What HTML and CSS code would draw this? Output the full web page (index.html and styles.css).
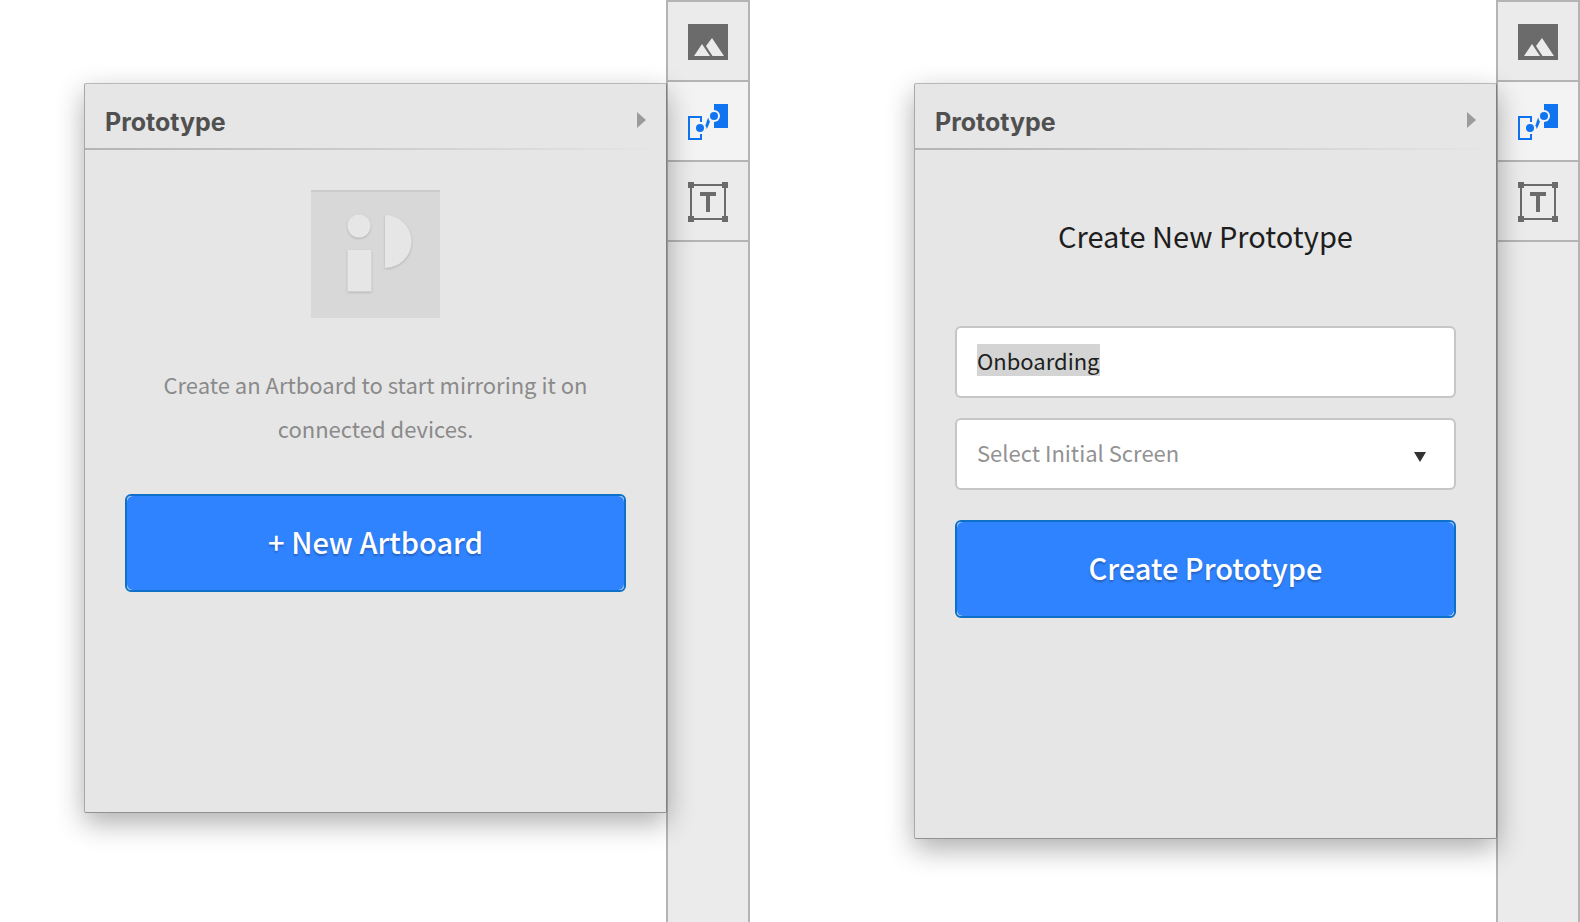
FILE: index.html
```html
<!DOCTYPE html>
<html lang="en">
<head>
  <meta charset="UTF-8" />
  <meta name="viewport" content="width=device-width, initial-scale=1.0" />
  <title>Prototype Panel</title>
  <link rel="stylesheet" href="styles.css">
</head>
<body>
  <!-- Shared toolbar icons -->
  <svg class="sprite" aria-hidden="true">
    <symbol id="icon-image" viewBox="0 0 40 40">
      <path fill="#6b6b6b" d="M0 2h40v36H0z"/>
      <path fill="#ebebeb" d="M6 34l8-12 8 12zM18 24l6-8 12 18H24.500z"/>
    </symbol>
    <symbol id="icon-prototype" viewBox="0 0 40 40">
      <path fill="none" stroke="#1073ef" stroke-width="2" d="M13 20v-5H1v22h12v-5"/>
      <path fill="#1073ef" d="M26 2h14v24H26z"/>
      <circle cx="26" cy="14" r="6" fill="#f3f3f3"/>
      <circle cx="26" cy="14" r="4" fill="#1073ef"/>
      <circle cx="12" cy="26" r="4" fill="#1073ef"/>
      <path fill="#1073ef" d="M20.500 15.500c0 2 .7 3 1.500 4-1.200 2.500-1.500 5-3.500 7.500 0-2-.5-2.800-1.200-3.300 1.400-2.700 1.200-5.700 3.200-8.200z"/>
    </symbol>
    <symbol id="icon-text" viewBox="0 0 40 40">
      <path fill="none" stroke="#6b6b6b" stroke-width="2" d="M3 3h34v34H3z"/>
      <path fill="#6b6b6b" d="M0 0h6v6H0zM34 0h6v6h-6zM0 34h6v6H0zM34 34h6v6h-6zM12 10h16v4h-6v16h-4V14h-6z"/>
    </symbol>
  </svg>

  <div class="container">
    <!-- Empty state -->
    <section class="screen">
      <div class="panel">
        <header class="panel-header">
          <h2>Prototype</h2>
          <button class="collapse" aria-label="Collapse panel">
            <svg width="9" height="16" viewBox="0 0 9 16"><path fill="#9b9b9b" d="M0 0l9 8-9 8z"/></svg>
          </button>
        </header>
        <div class="panel-body empty">
          <svg class="logo" width="129" height="128" viewBox="0 0 129 128" aria-hidden="true">
            <path fill="#d8d8d8" d="M0 0h129v128H0z"/>
            <path fill="#cbcbcb" d="M0 0h129v2H0z"/>
            <g class="logo-shapes">
              <circle cx="48" cy="36" r="11.500"/>
              <path d="M36.500 60h24v41.500h-24z"/>
              <path d="M74 25a26 26 0 0 1 0 53z"/>
            </g>
          </svg>
          <p>Create an Artboard to start mirroring it on connected devices.</p>
          <button class="submit"><span>+ New Artboard</span></button>
        </div>
      </div>
      <nav class="toolbar">
        <button aria-label="Images"><svg><use href="#icon-image"/></svg></button>
        <button class="active" aria-label="Prototype"><svg><use href="#icon-prototype"/></svg></button>
        <button aria-label="Text"><svg><use href="#icon-text"/></svg></button>
      </nav>
    </section>

    <!-- New prototype form -->
    <section class="screen">
      <div class="panel">
        <header class="panel-header">
          <h2>Prototype</h2>
          <button class="collapse" aria-label="Collapse panel">
            <svg width="9" height="16" viewBox="0 0 9 16"><path fill="#9b9b9b" d="M0 0l9 8-9 8z"/></svg>
          </button>
        </header>
        <form class="panel-body">
          <h1>Create New Prototype</h1>
          <input type="text" id="name" aria-label="Prototype name" value="Onboarding" />
          <div class="select-box">
            <select id="initial-screen" aria-label="Initial screen">
              <option>Select Initial Screen</option>
            </select>
            <svg width="12" height="10" viewBox="0 0 12 10"><path fill="#333" d="M0 0h12L6 10z"/></svg>
          </div>
          <button type="submit" class="submit"><span>Create Prototype</span></button>
        </form>
      </div>
      <nav class="toolbar">
        <button aria-label="Images"><svg><use href="#icon-image"/></svg></button>
        <button class="active" aria-label="Prototype"><svg><use href="#icon-prototype"/></svg></button>
        <button aria-label="Text"><svg><use href="#icon-text"/></svg></button>
      </nav>
    </section>
  </div>

  <script>
    // start with the name selected so it can be typed over
    const nameInput = document.getElementById('name');
    nameInput.focus();
    nameInput.select();
  </script>
</body>
</html>
```

FILE: styles.css
```css
* {
  margin: 0;
  padding: 0;
  box-sizing: border-box;
}

body {
  font-family: 'Noto Sans CJK SC', 'Open Sans', sans-serif;
  font-size: 22px;
  color: #1e1e1e;
  background: #fff;
}

button, input, select {
  font: inherit;
}

.sprite {
  display: none;
}

.container {
  display: flex;
  gap: 80px;
  min-height: 100vh;
}

.screen {
  flex: 1;
  display: flex;
  padding-left: 84px;
}

/* Panel, its right border sits on the toolbar's left one */
.panel {
  flex: 1;
  align-self: flex-start;
  position: relative;
  z-index: 1;
  margin: 83px -1px 0 0;
  padding-bottom: 220px;
  background: #e6e6e6;
  border: 1px solid #a8a8a8;
  border-top-color: #b8b8b8;
  border-right-color: #808080;
  border-bottom-color: #929292;
  border-radius: 2px;
  box-shadow: 0 10px 28px rgba(0, 0, 0, 0.32);
}

.panel-header {
  display: flex;
  align-items: center;
  justify-content: space-between;
  height: 66px;
  padding: 12px 20px 0 20px;
  border-bottom: 2px solid;
  border-image: linear-gradient(to right, #b4b4b4, #e6e6e6) 1;
}

.panel-header h2 {
  font-family: Inter, Roboto, sans-serif;
  font-size: 25px;
  font-weight: 700;
  line-height: 32px;
  color: #505050;
}

.collapse {
  display: flex;
  padding-bottom: 4px;
  border: none;
  background: transparent;
  cursor: pointer;
}

.panel-body {
  display: flex;
  flex-direction: column;
  padding: 0 40px;
}

.empty {
  padding-top: 40px;
}

.logo {
  align-self: center;
}

.logo-shapes {
  fill: #e6e6e6;
  filter: drop-shadow(0 1px 1px rgba(0, 0, 0, 0.18));
}

.panel-body p {
  margin: 44px 0;
  padding: 0 32px;
  line-height: 44px;
  text-align: center;
  color: #8a8a8a;
}

.panel-body h1 {
  margin: 61px 0 67px;
  font-size: 29px;
  font-weight: 400;
  line-height: 48px;
  text-align: center;
}

.panel-body input,
.panel-body select {
  width: 100%;
  height: 72px;
  padding: 0 20px 4px;
  border: 2px solid #c6c6c6;
  border-radius: 6px;
  background: #fff;
  color: #1e1e1e;
  outline: none;
}

.panel-body input::selection {
  background: #d4d4d4;
  color: #1e1e1e;
}

.select-box {
  position: relative;
  margin: 20px 0 30px;
}

.panel-body select {
  display: block;
  appearance: none;
  color: #929292;
}

.select-box svg {
  position: absolute;
  top: 34px;
  right: 30px;
  pointer-events: none;
}

.submit {
  display: flex;
  height: 98px;
  border: 2px solid #0f70c8;
  border-radius: 6px;
  background: #c4d8ee;
  color: #fff;
  font-size: 29px;
  font-weight: 500;
  text-shadow: 0 2px 2px rgba(0, 0, 0, 0.25);
  cursor: pointer;
}

.submit span {
  flex: 1;
  border-radius: 6px;
  background: #3083ff;
  line-height: 90px;
  padding-bottom: 4px;
}

/* Toolbar */
.toolbar {
  width: 84px;
  background: #ebebeb;
  border: 2px solid #b4b4b4;
  border-bottom: none;
}

.toolbar button {
  display: flex;
  align-items: center;
  justify-content: center;
  width: 100%;
  height: 80px;
  padding-top: 2px;
  border: none;
  border-bottom: 2px solid #b4b4b4;
  background: transparent;
  cursor: pointer;
}

.toolbar button.active {
  background: #f3f3f3;
}

.toolbar svg {
  width: 40px;
  height: 40px;
}
```
